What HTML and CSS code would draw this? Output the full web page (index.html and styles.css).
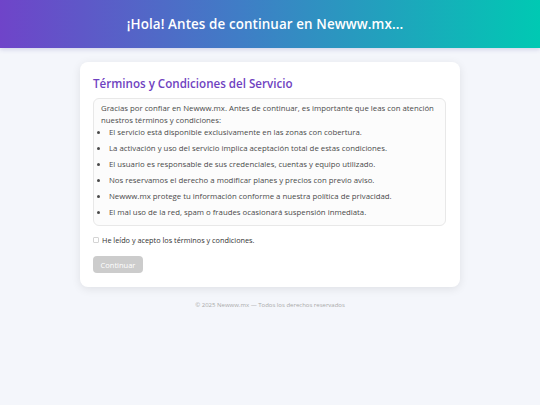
FILE: index.html
```html
<!DOCTYPE html>
<html lang="es">
<head>
<meta charset="utf-8">
<link rel="stylesheet" href="styles.css">
</head>
<body>
<header class="top">
  <h1 class="top-title">¡Hola! Antes de continuar en Newww.mx...</h1>
</header>
<main class="wrap">
  <section class="card">
    <h2 class="card-title">Términos y Condiciones del Servicio</h2>
    <div class="terms">
      <p class="intro">Gracias por confiar en Newww.mx. Antes de continuar, es importante que leas con atención nuestros términos y condiciones:</p>
      <ul class="list">
        <li>El servicio está disponible exclusivamente en las zonas con cobertura.</li>
        <li>La activación y uso del servicio implica aceptación total de estas condiciones.</li>
        <li>El usuario es responsable de sus credenciales, cuentas y equipo utilizado.</li>
        <li>Nos reservamos el derecho a modificar planes y precios con previo aviso.</li>
        <li>Newww.mx protege tu información conforme a nuestra política de privacidad.</li>
        <li>El mal uso de la red, spam o fraudes ocasionará suspensión inmediata.</li>
      </ul>
    </div>
    <label class="accept"><span class="box"></span>He leído y acepto los términos y condiciones.</label>
    <button class="btn" disabled>Continuar</button>
  </section>
  <footer class="foot">© 2025 Newww.mx — Todos los derechos reservados</footer>
</main>
</body>
</html>
```
FILE: styles.css
```css
* { box-sizing: border-box; }
html, body { margin: 0; padding: 0; }
body {
  background: #f4f6fb;
  font-family: "Open Sans", "DejaVu Sans", sans-serif;
  color: #333;
  width: 540px;
  height: 405px;
  overflow: hidden;
}
.top {
  height: 48px;
  background: linear-gradient(90deg, #6f44c9 0%, #3f7ec6 45%, #00c9b3 100%);
  display: flex;
  align-items: center;
  justify-content: center;
  box-shadow: 0 2px 4px rgba(80, 80, 160, 0.18);
}
.top-title {
  margin: 0 10px 0 0;
  color: #fff;
  font-size: 13.4px;
  font-weight: 600;
  letter-spacing: 0.1px;
}
.wrap {
  display: flex;
  flex-direction: column;
  align-items: center;
  padding-top: 14px;
}
.card {
  width: 380px;
  background: #fff;
  border-radius: 8px;
  box-shadow: 0 2px 10px rgba(0, 0, 0, 0.09);
  padding: 14px 14px 14px 13px;
  display: flex;
  flex-direction: column;
  align-items: flex-start;
}
.card-title {
  margin: 0 0 6px 0;
  color: #6f42c1;
  font-size: 11.6px;
  font-weight: 600;
  line-height: 16px;
}
.terms {
  width: 100%;
  border: 1px solid #e8e8e8;
  background: #fcfcfc;
  border-radius: 6px;
  padding: 3px 8px 7px 7px;
  font-size: 7.8px;
  color: #4a4a4a;
}
.intro {
  margin: 0;
  line-height: 12px;
}
.list {
  margin: 0;
  padding-left: 8px;
}
.list li {
  line-height: 12px;
  margin-bottom: 4px;
}
.list li:last-child { margin-bottom: 0; }
.accept {
  margin-top: 8px;
  display: flex;
  align-items: center;
  font-size: 7.3px;
  color: #333;
  line-height: 12px;
}
.box {
  width: 6px;
  height: 6px;
  border: 1px solid #d4d4d4;
  border-radius: 1px;
  margin-right: 3px;
  background: #fff;
}
.btn {
  margin-top: 10px;
  width: 50px;
  height: 17px;
  border: none;
  border-radius: 4px;
  background: #cccccc;
  color: #fff;
  font-family: inherit;
  font-size: 7.5px;
  padding: 0;
}
.foot {
  margin-top: 14px;
  font-size: 6px;
  color: #aaa;
}
```
